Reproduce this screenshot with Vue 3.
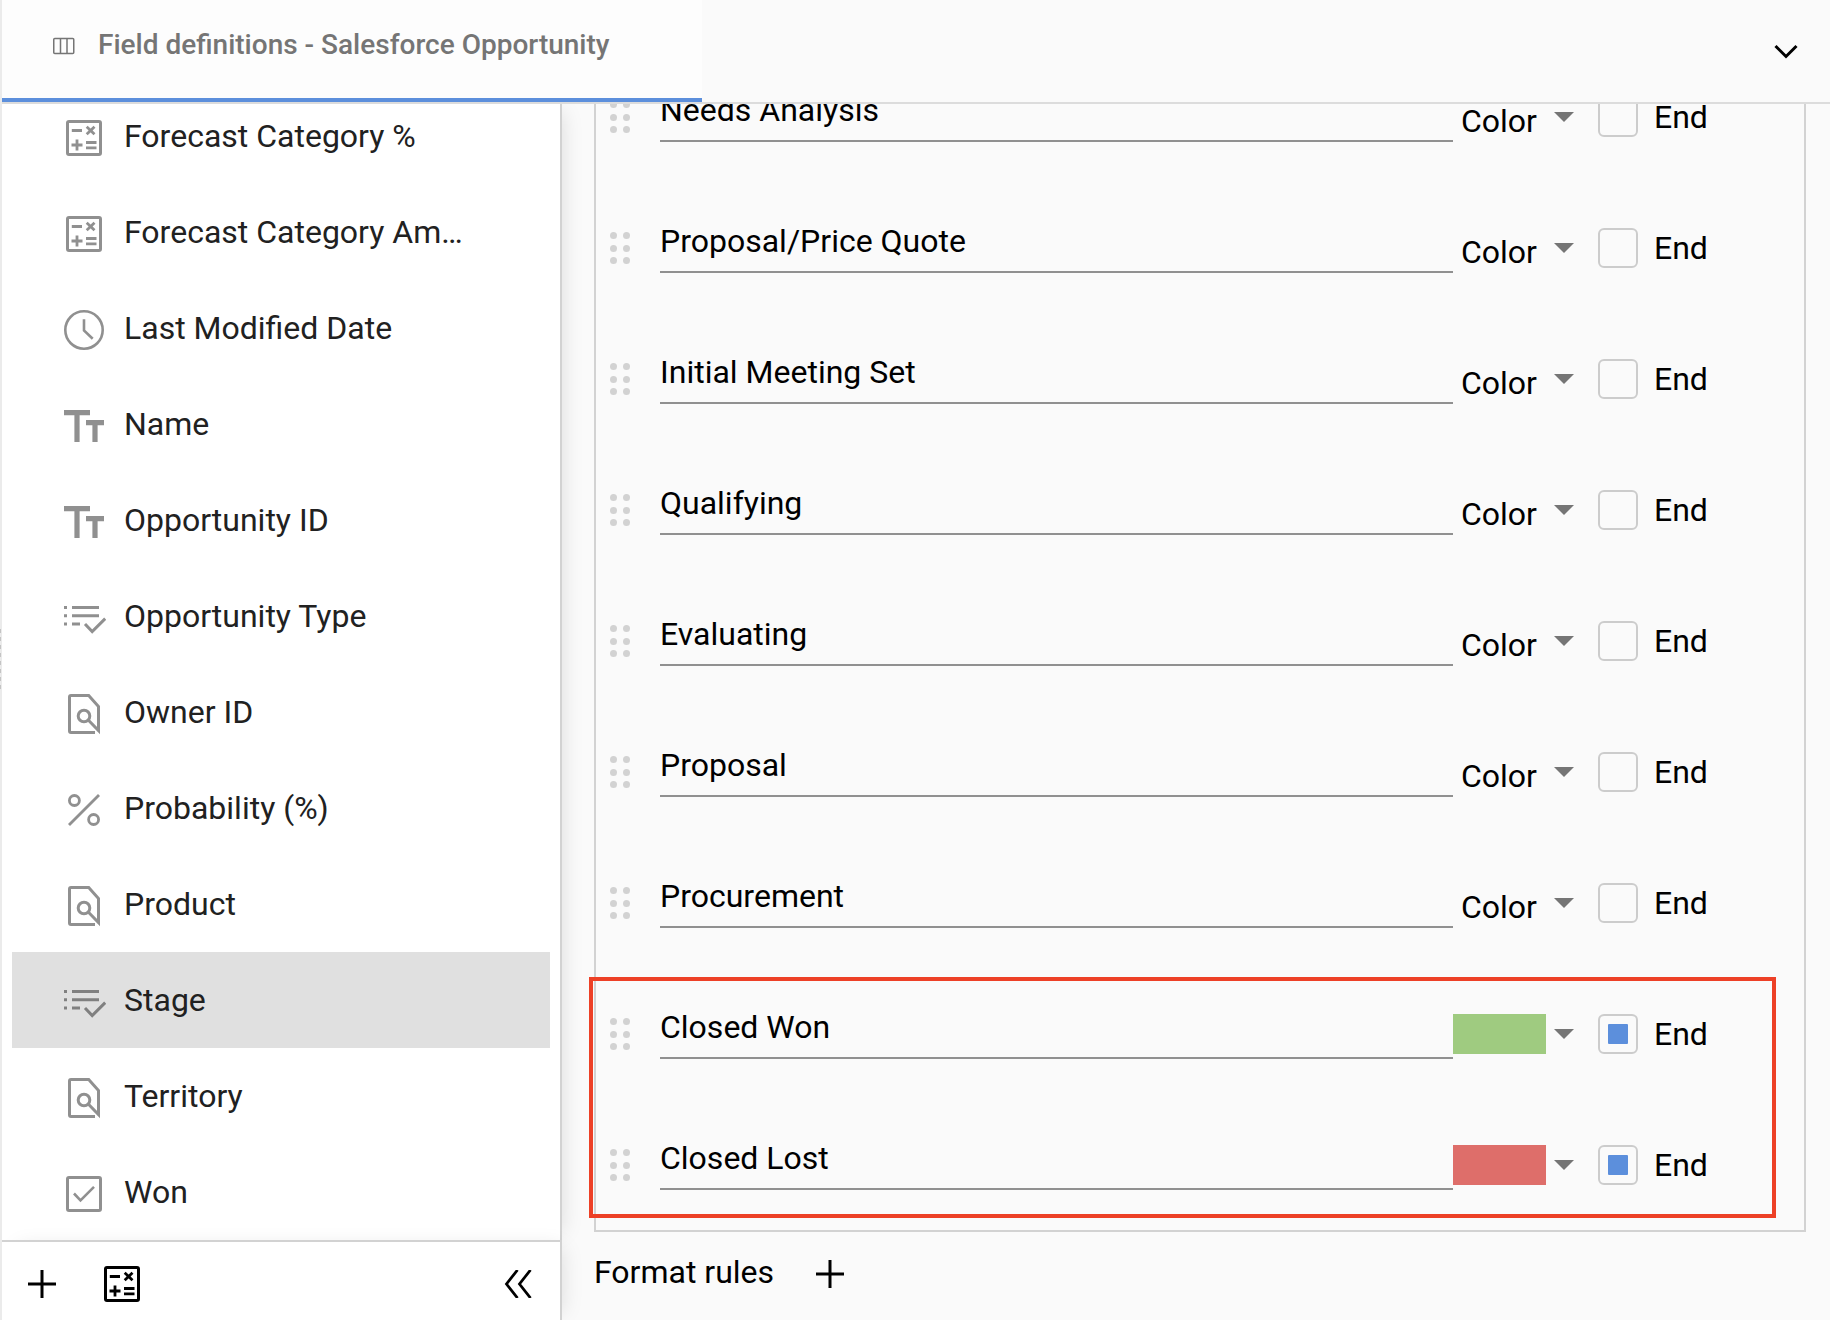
<script setup>
const fields = [
  { name: 'Forecast Category %', icon: 'calc' },
  { name: 'Forecast Category Am…', icon: 'calc' },
  { name: 'Last Modified Date', icon: 'clock' },
  { name: 'Name', icon: 'text' },
  { name: 'Opportunity ID', icon: 'text' },
  { name: 'Opportunity Type', icon: 'list' },
  { name: 'Owner ID', icon: 'lookup' },
  { name: 'Probability (%)', icon: 'percent' },
  { name: 'Product', icon: 'lookup' },
  { name: 'Stage', icon: 'list', active: true },
  { name: 'Territory', icon: 'lookup' },
  { name: 'Won', icon: 'check' },
]

// Inner shapes on a 44x44 grid
const icons = {
  calc: '<rect x="5.5" y="5.5" width="33" height="33" rx="1.5"/><path d="M9.8 14.5h10.2M24.7 10.8l7.8 7.4M32.5 10.8l-7.8 7.4M9.5 29h11M15 23.5v11M24 26.5h10.5M24 31.8h10.5" stroke-width="2.8"/>',
  clock: '<circle cx="22" cy="22" r="18.7" stroke-width="2.6"/><path d="M22 11.3v11.2l8.7 8.2" stroke-width="2.6"/>',
  text: '<path d="M2 8.6h26M15 8.6v29.4M24 18.6h18M33 18.6v19.4" stroke-width="5.2"/>',
  list: '<path d="M2 11.4h3M10 11.4h27M2 19.7h3M10 19.7h27M2 28h3M10 28h8M23 28l7.2 7.6 13-13" stroke-width="3"/>',
  lookup: '<path d="M33 40.5h-24a1.5 1.5 0 0 1-1.5-1.5v-34a1.5 1.5 0 0 1 1.5-1.5h17.7l9.8 11v24l-10.3-10.5" stroke-width="3"/><circle cx="22" cy="24" r="5.8" stroke-width="3"/>',
  percent: '<circle cx="12.4" cy="12.5" r="5" stroke-width="2.8"/><circle cx="31.6" cy="31.5" r="5" stroke-width="2.8"/><path d="M7 37L37 7" stroke-width="2.8"/>',
  check: '<rect x="5.5" y="5.5" width="33" height="33" rx="1.5"/><path d="M12 21.5l6.5 6.8 13.5-13.5" stroke-width="2.6"/>',
}

const options = [
  { name: 'Needs Analysis' },
  { name: 'Proposal/Price Quote' },
  { name: 'Initial Meeting Set' },
  { name: 'Qualifying' },
  { name: 'Evaluating' },
  { name: 'Proposal' },
  { name: 'Procurement' },
  { name: 'Closed Won', color: 'green', end: true },
  { name: 'Closed Lost', color: 'red', end: true },
]
</script>

<template>
  <div class="app">
    <div class="gutter"><i v-for="n in 8" :key="n"></i></div>
    <div class="window">
      <header class="header">
        <div class="tab">
          <svg class="tab-icon" width="24" height="20" viewBox="0 0 24 20" fill="none" stroke="#757575" stroke-width="1.5">
            <rect x="1.75" y="2.5" width="20" height="15" rx="1" /><path d="M8.5 2.5v15M15 2.5v15" />
          </svg>
          <span class="tab-title">Field definitions - Salesforce Opportunity</span>
        </div>
        <svg class="chevron" width="26" height="18" viewBox="0 0 26 18" fill="none" stroke="#000" stroke-width="3">
          <path d="M2.5 3L13 13.500 23.500 3" />
        </svg>
      </header>
      <div class="body">
        <aside class="sidebar">
          <ul class="fields">
            <li v-for="f in fields" :key="f.name" class="field" :class="{ active: f.active }">
              <svg class="field-icon" width="44" height="44" viewBox="0 0 44 44" fill="none" stroke="currentColor" stroke-width="3" v-html="icons[f.icon]"></svg>
              <span class="field-name">{{ f.name }}</span>
            </li>
          </ul>
          <footer class="tools">
            <svg width="28" height="28" viewBox="0 0 28 28" fill="none" stroke="#000" stroke-width="3"><path d="M0 14h28M14 0v28" /></svg>
            <svg class="tool-calc" width="44" height="44" viewBox="0 0 44 44" fill="none" stroke="#000" stroke-width="3" v-html="icons.calc"></svg>
            <svg class="collapse" width="28" height="28" viewBox="0 0 28 28" fill="none" stroke="#000" stroke-width="2.8"><path d="M13.500 0L2.500 14l11 14M26.500 0l-11 14 11 14" /></svg>
          </footer>
        </aside>
        <main class="content">
          <section class="panel">
            <div v-for="o in options" :key="o.name" class="option">
              <div class="grip"><i v-for="n in 6" :key="n"></i></div>
              <div class="value">{{ o.name }}</div>
              <div class="picker">
                <span v-if="o.color" class="swatch" :class="o.color"></span>
                <span v-else class="color-label">Color</span>
              </div>
              <svg class="caret" width="20" height="10" viewBox="0 0 20 10"><path d="M0 0h20L10 10z" fill="#757575" /></svg>
              <div class="box"><b v-if="o.end"></b></div>
              <span class="end">End</span>
            </div>
            <div class="highlight"></div>
          </section>
          <div class="rules">
            <span class="rules-label">Format rules</span>
            <svg width="28" height="28" viewBox="0 0 28 28" fill="none" stroke="#000" stroke-width="3"><path d="M0 14h28M14 0v28" /></svg>
          </div>
        </main>
      </div>
    </div>
  </div>
</template>

<style>
body { margin: 0; overflow: hidden; }
</style>

<style scoped>
* { box-sizing: border-box; }
.app { display: flex; width: 1830px; height: 1320px; overflow: hidden; background: #fafafa; font-family: Roboto, "Liberation Sans", sans-serif; font-size: 32px; color: #000; }
.gutter { width: 2px; flex: none; background: #ebebeb; padding-top: 629px; display: flex; flex-direction: column; gap: 4px; }
.gutter i { width: 1px; height: 4px; background: #c4c4c4; }
.window { flex: 1; display: flex; flex-direction: column; min-width: 0; }
.header { height: 104px; flex: none; display: flex; justify-content: space-between; border-bottom: 2px solid #dcdcdc; }
.tab { width: 700px; height: 102px; display: flex; align-items: center; background: #fdfdfd; border-bottom: 4px solid #5c8fdc; padding: 0 0 6px 50px; font-size: 28px; font-weight: 500; color: #757575; white-space: nowrap; }
.tab-icon { margin-right: 22px; }
.tab-title { margin-bottom: 3px; }
.chevron { margin: 43px 31px 0 0; }
.body { flex: 1; display: flex; min-height: 0; }
.sidebar { width: 560px; flex: none; display: flex; flex-direction: column; clip-path: inset(0 -30px 0 0); }
.fields, .tools { background: #fff; border-right: 2px solid #d2d2d2; box-shadow: 8px 0 20px -8px rgba(0, 0, 0, .13); }
.fields { height: 1136px; margin: 0; padding: 0 10px; list-style: none; overflow: hidden; display: flex; flex-direction: column; justify-content: flex-end; }
.field { height: 96px; flex: none; display: flex; align-items: center; padding-left: 50px; color: #212121; white-space: nowrap; }
.field.active { background: #e0e0e0; }
.field-icon { color: #909090; margin: 4px 18px 0 0; }
.active .field-icon { color: #808080; }
.tools { height: 80px; border-top: 2px solid #d2d2d2; display: flex; align-items: center; padding: 6px 28px 0 26px; }
.tool-calc { margin-left: 44px; }
.collapse { margin-left: auto; }
.content { flex: 1; min-width: 0; overflow: hidden; padding-left: 32px; }
.panel { position: relative; width: 1212px; height: 1135px; margin-top: -7px; border: 2px solid #d2d2d2; border-top: 0; display: flex; flex-direction: column; }
.option { height: 131px; flex: none; display: flex; align-items: flex-start; padding-left: 14px; }
.grip { width: 20px; margin: 4px 30px 0 0; display: grid; grid-template-columns: 7px 7px; column-gap: 6px; row-gap: 5.5px; }
.grip i { width: 7px; height: 7px; border-radius: 50%; background: #d2d2d2; }
.value { width: 793px; height: 45px; line-height: 26px; border-bottom: 2px solid #909090; white-space: nowrap; }
.picker { width: 93px; height: 40px; }
.color-label { display: block; padding-left: 8px; line-height: 48px; }
.swatch { display: block; height: 40px; }
.green { background: #9fcb80; }
.red { background: #de6e6a; }
.caret { margin: 15px 24px 0 8px; }
.box { width: 40px; height: 40px; border: 2px solid #ccc; border-radius: 6px; display: flex; align-items: center; justify-content: center; }
.box b { width: 20px; height: 20px; border-radius: 1px; background: #5c8fdc; }
.end { margin-left: 16px; line-height: 40px; }
.highlight { position: absolute; left: -7px; top: 880px; width: 1187px; height: 241px; border: 4px solid #ed4026; }
.rules { display: flex; align-items: center; height: 84px; gap: 42px; }
.rules-label { margin-bottom: 4px; }
</style>
